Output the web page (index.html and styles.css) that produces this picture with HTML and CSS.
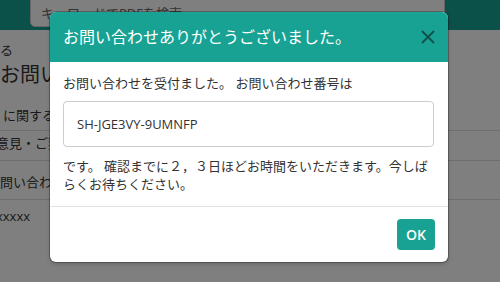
FILE: index.html
```html
<!DOCTYPE html>
<html lang="ja">
<head>
<meta charset="utf-8">
<link rel="stylesheet" href="styles.css">
</head>
<body>
<div class="page">
  <div class="topbar">
    <div class="search">キーワードでPDFを検索</div>
  </div>
  <div class="content">
    <div class="r r1">る</div>
    <div class="r r2">お問い</div>
    <div class="r r3">に関する</div>
    <div class="r r4"><span class="cut4">ご意見・ご要望</span></div>
    <div class="r r5"><span class="cut5">お問い合わせ</span></div>
    <div class="r r6"><span class="cut6">xxxxx</span></div>
  </div>
</div>
<div class="overlay"></div>
<div class="modal">
  <div class="modal-header">
    <h5 class="modal-title">お問い合わせありがとうございました。</h5>
    <button class="close" aria-label="閉じる">
      <svg width="14" height="14" viewBox="0 0 14 14"><path d="M1 1 L13 13 M13 1 L1 13" stroke="currentColor" stroke-width="1.8" fill="none"/></svg>
    </button>
  </div>
  <div class="modal-body">
    <p class="msg">お問い合わせを受付ました。 お問い合わせ番号は</p>
    <div class="number">SH-JGE3VY-9UMNFP</div>
    <p class="msg2">です。 確認までに２，３日ほどお時間をいただきます。今しばらくお待ちください。</p>
  </div>
  <div class="modal-footer">
    <button class="btn-ok">OK</button>
  </div>
</div>
</body>
</html>
```
FILE: styles.css
```css
* { box-sizing: border-box; }
html, body { margin: 0; padding: 0; }
body {
  width: 500px;
  height: 282px;
  overflow: hidden;
  position: relative;
  background: #fff;
  font-family: "Open Sans", "Noto Sans CJK JP", sans-serif;
  color: #333;
}
.topbar {
  height: 37px;
  background: #16a093;
  padding-left: 30px;
}
.search {
  width: 415px;
  height: 34px;
  margin-top: -7px;
  background: #fff;
  border: 1px solid #ccc;
  border-radius: 5px;
  padding-left: 10px;
  font-size: 13px;
  line-height: 38px;
  color: #666;
}
.content { font-size: 13px; color: #333; }
.r { line-height: 20px; white-space: nowrap; overflow: hidden; }
.r1 { margin-top: 10px; }
.r2 { font-size: 20px; line-height: 30px; }
.r3 { padding: 15px 0 5px 3px; border-bottom: 1px solid #ddd; }
.r4 { padding: 2px 0 7px; border-bottom: 1px solid #ddd; }
.r5 { padding: 11px 0 7px; border-bottom: 1px solid #ddd; }
.r6 { padding-top: 6px; }
.cut4 { margin-left: -17px; }
.cut5 { margin-left: -13px; }
.cut6 { margin-left: -4px; }
.overlay {
  position: absolute;
  inset: 0;
  background: rgba(0, 0, 0, 0.5);
}
.modal {
  position: absolute;
  left: 50px;
  top: 12px;
  width: 398px;
  height: 250px;
  background: #fff;
  border-radius: 6px;
  box-shadow: 0 0 0 1px rgba(0,0,0,0.25), 0 2px 4px rgba(0,0,0,0.2);
  overflow: hidden;
  display: flex;
  flex-direction: column;
}
.modal-header {
  height: 50px;
  background: #18a294;
  display: flex;
  align-items: center;
  justify-content: space-between;
  padding: 0 13px 0 13px;
}
.modal-title {
  margin: 0;
  font-size: 16px;
  font-weight: normal;
  color: #fff;
  line-height: 24px;
}
.close {
  border: 0;
  background: none;
  padding: 0;
  margin-right: 0;
  width: 14px;
  height: 14px;
  color: rgba(0, 0, 0, 0.5);
  display: flex;
}
.modal-body {
  padding: 12px 14px 13px 13px;
  border-bottom: 1px solid #e2e2e2;
  font-size: 13px;
  color: #333;
}
.msg { margin: 0; line-height: 18px; }
.number {
  margin-top: 9px;
  height: 46px;
  border: 1px solid #ccc;
  border-radius: 4px;
  padding-left: 13px;
  display: flex;
  align-items: center;
  font-size: 13px;
  color: #333;
}
.msg2 { margin: 10px 0 0; line-height: 18px; }
.modal-footer {
  flex: 1;
  display: flex;
  align-items: center;
  justify-content: flex-end;
  padding: 0 13px;
}
.btn-ok {
  width: 38px;
  height: 31px;
  border: 0;
  border-radius: 4px;
  background: #18a294;
  color: #fff;
  font-family: "Open Sans", sans-serif;
  font-size: 14px;
  font-weight: 600;
  padding: 0;
}
```
